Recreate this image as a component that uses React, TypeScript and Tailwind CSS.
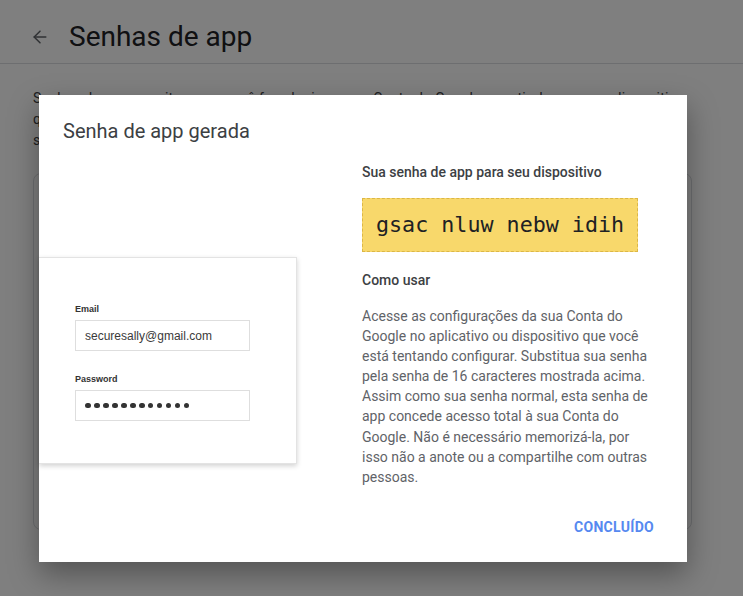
import { ArrowLeft } from 'lucide-react';

function LoginIllustration() {
  return (
    <div className="w-[258px] h-[207px] bg-white border border-l-0 border-[#e3e3e3] shadow-[0_2px_5px_rgba(0,0,0,0.18)] pt-[45px] pl-[36px] font-['Liberation_Sans',Arial,sans-serif]">
      <div className="text-[9px] leading-[12px] font-bold text-[#333]">Email</div>
      <div className="mt-[5px] w-[175px] h-[31px] border border-[#dedede] flex items-center px-[9px] text-[12px] text-[#3a3a3a]">
        securesally@gmail.com
      </div>
      <div className="mt-[22px] text-[9px] leading-[12px] font-bold text-[#333]">Password</div>
      <div className="mt-[5px] w-[175px] h-[31px] border border-[#dedede] flex items-center gap-[3.4px] px-[9px]">
        {Array.from({ length: 12 }).map((_, i) => (
          <span key={i} className="w-[5.6px] h-[5.6px] rounded-full bg-[#333]" />
        ))}
      </div>
    </div>
  );
}

export default function App() {
  return (
    <div className="relative w-[743px] h-[596px] overflow-hidden bg-white font-['Roboto',Arial,sans-serif]">
      {/* page behind the dialog */}
      <div className="flex items-center h-[64px] border-b border-[#dadce0] pl-[30px] pt-[10px]">
        <ArrowLeft className="w-[20px] h-[20px] text-[#5f6368]" strokeWidth={1.8} />
        <h1 className="ml-[19px] text-[28px] leading-[36px] text-[#202124] font-normal">Senhas de app</h1>
      </div>
      <div className="px-[33px] pt-[24px]">
        <div className="text-[14px] leading-[21px] tracking-[0.25px] text-[#3c4043] w-[660px] whitespace-nowrap overflow-hidden">
          <div>Senhas de app permitem que você faça login na sua Conta do Google a partir de apps em dispositi</div>
          <div>que não oferecem suporte à verificação em duas etapas. Você só precisa inserir a senha uma vez,</div>
          <div>sem precisar lembrá-la.</div>
        </div>
        <div className="mt-[22px] w-[659px] h-[357px] rounded-[8px] border border-[#dadce0]" />
      </div>

      {/* overlay */}
      <div className="absolute inset-0 bg-black/50" />

      {/* dialog */}
      <div className="absolute left-[39px] top-[95px] w-[648px] h-[467px] bg-white shadow-[0_12px_28px_rgba(0,0,0,0.35)] flex flex-col pt-[22px]">
        <h2 className="pl-[24px] text-[20px] leading-[28px] text-[#3c4043] font-normal">Senha de app gerada</h2>

        <div className="flex mt-[17px]">
          <div className="w-[323px] pt-[95px]">
            <LoginIllustration />
          </div>
          <div className="w-[292px]">
            <div className="text-[14px] leading-[20px] font-medium text-[#3c4043]">
              Sua senha de app para seu dispositivo
            </div>
            <div className="mt-[16px] w-fit bg-[#f8d86b] border border-dashed border-[#dcb746] px-[13px] h-[54px] flex items-center">
              <span className="font-['DejaVu_Sans_Mono',monospace] text-[21.7px] text-[#202124]">gsac nluw nebw idih</span>
            </div>
            <div className="mt-[18px] text-[14px] leading-[20px] font-medium text-[#3c4043]">Como usar</div>
            <p className="mt-[16px] text-[14px] leading-[20.1px] text-[#5f6368]">
              Acesse as configurações da sua Conta do Google no aplicativo ou dispositivo que você está tentando
              configurar. Substitua sua senha pela senha de 16 caracteres mostrada acima. Assim como sua senha
              normal, esta senha de app concede acesso total à sua Conta do Google. Não é necessário
              memorizá-la, por isso não a anote ou a compartilhe com outras pessoas.
            </p>
          </div>
        </div>

        <div className="flex justify-end pr-[25px] mt-[23px]">
          <button className="h-[36px] px-[8px] text-[14px] font-bold tracking-[0.3px] text-[#5689f0]">CONCLUÍDO</button>
        </div>
      </div>
    </div>
  );
}
